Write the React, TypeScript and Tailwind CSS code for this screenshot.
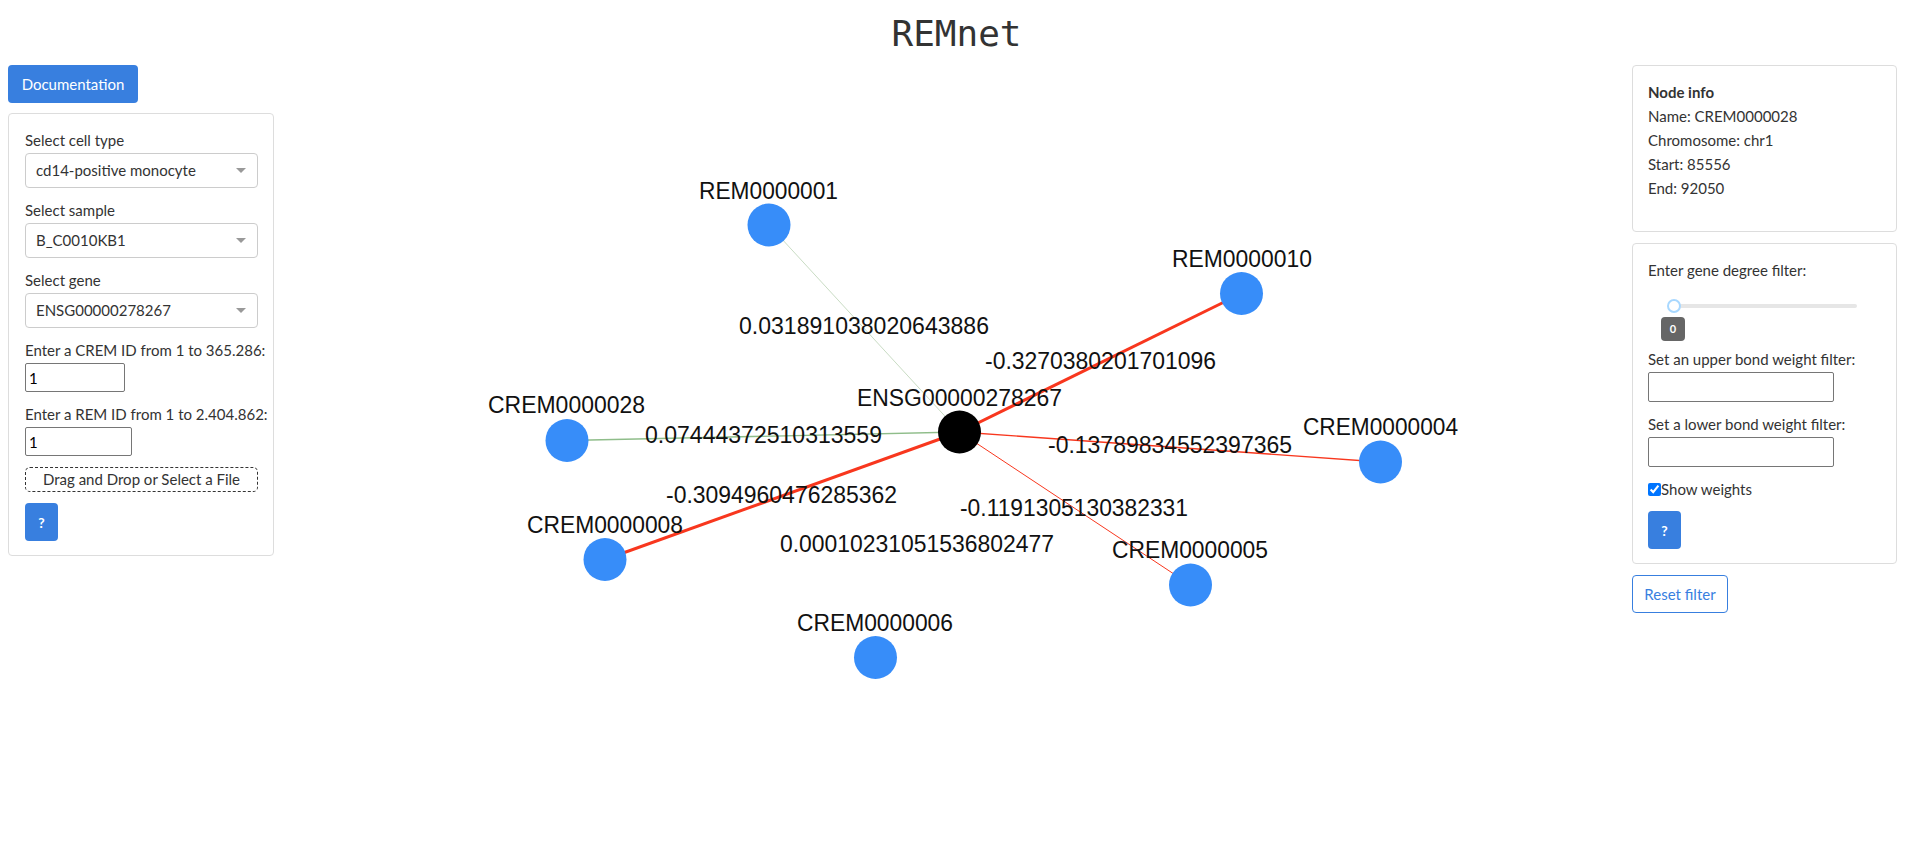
import React from "react";

const UI = { fontFamily: '"Lato", "Noto Sans", sans-serif' };

type N = { id: string; cx: number; cy: number; lx: number; lw: number; ly: number; fill: string };

const BLUE = "#378df9";
const R = 21.5;
const nodes: N[] = [
  { id: "REM0000001", cx: 769, cy: 225, lx: 699, lw: 139, ly: 199, fill: BLUE },
  { id: "REM0000010", cx: 1241.5, cy: 293.5, lx: 1172, lw: 140, ly: 267, fill: BLUE },
  { id: "CREM0000028", cx: 567, cy: 440.5, lx: 488, lw: 157, ly: 413, fill: BLUE },
  { id: "CREM0000004", cx: 1380.5, cy: 462, lx: 1303, lw: 155, ly: 435, fill: BLUE },
  { id: "CREM0000008", cx: 605, cy: 559.5, lx: 527, lw: 156, ly: 533, fill: BLUE },
  { id: "CREM0000005", cx: 1190.5, cy: 585, lx: 1112, lw: 156, ly: 558, fill: BLUE },
  { id: "CREM0000006", cx: 875.5, cy: 657.5, lx: 797, lw: 156, ly: 631, fill: BLUE },
  { id: "ENSG00000278267", cx: 959.5, cy: 432, lx: 857, lw: 205, ly: 406, fill: "#000000" },
];

const C = { x: 959.5, y: 432 };
const edges = [
  { to: 0, color: "#c9dcc4", w: 1 },
  { to: 2, color: "#8fbd8a", w: 1.3 },
  { to: 1, color: "#f8371e", w: 3 },
  { to: 4, color: "#f8371e", w: 3 },
  { to: 3, color: "#f8371e", w: 1.3 },
  { to: 5, color: "#f8371e", w: 1 },
];

const edgeLabels = [
  { t: "0.031891038020643886", x: 739, w: 250, y: 334 },
  { t: "0.07444372510313559", x: 645, w: 237, y: 443 },
  { t: "-0.3270380201701096", x: 985, w: 231, y: 369 },
  { t: "-0.13789834552397365", x: 1048, w: 244, y: 453 },
  { t: "-0.3094960476285362", x: 666, w: 231, y: 503 },
  { t: "-0.1191305130382331", x: 960, w: 228, y: 516 },
  { t: "0.00010231051536802477", x: 780, w: 274, y: 552 },
];

function Graph() {
  return (
    <svg width="1358" height="802" viewBox="274 65 1358 802" className="block">
      {edges.map((e, i) => (
        <line key={i} x1={C.x} y1={C.y} x2={nodes[e.to].cx} y2={nodes[e.to].cy} stroke={e.color} strokeWidth={e.w} />
      ))}
      {nodes.map((n) => (
        <circle key={n.id} cx={n.cx} cy={n.cy} r={R} fill={n.fill} />
      ))}
      {nodes.map((n) => (
        <text
          key={n.id + "l"}
          x={n.lx}
          y={n.ly}
          textLength={n.lw}
          lengthAdjust="spacingAndGlyphs"
          fontFamily='"Liberation Sans", Arial, sans-serif'
          fontSize="23"
          fill="#111"
        >
          {n.id}
        </text>
      ))}
      {edgeLabels.map((l) => (
        <text
          key={l.t}
          x={l.x}
          y={l.y}
          textLength={l.w}
          lengthAdjust="spacingAndGlyphs"
          fontFamily='"Liberation Sans", Arial, sans-serif'
          fontSize="23"
          fill="#111"
        >
          {l.t}
        </text>
      ))}
    </svg>
  );
}

function FakeSelect({ value }: { value: string }) {
  return (
    <div className="mt-[3px] h-[35px] w-[233px] border border-[#cccccc] rounded-[4px] flex items-center justify-between pl-[10px] pr-[11px] text-[15px] text-[#333]">
      <span>{value}</span>
      <svg width="10" height="5" viewBox="0 0 10 5">
        <path d="M0 0 L10 0 L5 5 Z" fill="#999" />
      </svg>
    </div>
  );
}

function Label({ children }: { children: React.ReactNode }) {
  return <div className="h-[20px] leading-[20px] text-[15px] text-[#333] whitespace-nowrap">{children}</div>;
}

function QButton() {
  return (
    <button className="h-[38px] w-[33px] rounded-[4px] bg-[#387fdf] text-white text-[14px] font-bold flex items-center justify-center">
      ?
    </button>
  );
}

export default function App() {
  return (
    <div className="w-[1913px] h-[867px] bg-white overflow-hidden" style={UI}>
      <div className="h-[65px] flex justify-center">
        <div
          className="pt-[16px] text-[36px] leading-none text-[#333]"
          style={{ fontFamily: '"DejaVu Sans Mono", monospace' }}
        >
          REMnet
        </div>
      </div>
      <div className="flex">
        <div className="ml-2 w-[266px] flex flex-col">
          <button className="h-[38px] w-[130px] rounded-[4px] bg-[#387fdf] text-white text-[15px]">
            Documentation
          </button>
          <div className="mt-[10px] border border-[#dddddd] rounded-[4px] px-4 pt-4 pb-[14px] flex flex-col">
            <Label>Select cell type</Label>
            <FakeSelect value="cd14-positive monocyte" />
            <div className="mt-3">
              <Label>Select sample</Label>
            </div>
            <FakeSelect value="B_C0010KB1" />
            <div className="mt-3">
              <Label>Select gene</Label>
            </div>
            <FakeSelect value="ENSG00000278267" />
            <div className="mt-3">
              <Label>Enter a CREM ID from 1 to 365.286:</Label>
            </div>
            <input
              defaultValue="1"
              className="mt-[3px] h-[29px] w-[100px] border border-[#767676] rounded-[2px] px-[3px] text-[15px] text-black outline-none"
            />
            <div className="mt-3">
              <Label>Enter a REM ID from 1 to 2.404.862:</Label>
            </div>
            <input
              defaultValue="1"
              className="mt-[3px] h-[29px] w-[107px] border border-[#767676] rounded-[2px] px-[3px] text-[15px] text-black outline-none"
            />
            <div className="mt-[11px] h-[25px] w-[233px] border border-dashed border-[#333] rounded-[5px] flex items-center justify-center text-[15px] text-[#333]">
              Drag and Drop or Select a File
            </div>
            <div className="mt-[11px]">
              <QButton />
            </div>
          </div>
        </div>
        <div className="flex-1">
          <Graph />
        </div>
        <div className="w-[265px] mr-4 flex flex-col">
          <div className="h-[167px] border border-[#dddddd] rounded-[4px] px-[15px] pt-[14px] text-[15px] leading-[24px] text-[#333]">
            <div className="font-bold">Node info</div>
            <div>Name: CREM0000028</div>
            <div>Chromosome: chr1</div>
            <div>Start: 85556</div>
            <div>End: 92050</div>
          </div>
          <div className="mt-[11px] border border-[#dddddd] rounded-[4px] px-[15px] pt-4 pb-[14px] flex flex-col">
            <Label>Enter gene degree filter:</Label>
            <div className="relative h-[69px]">
              <div className="absolute left-[20px] top-[24px] w-[189px] h-[4px] rounded-full bg-[#e6e6e6]" />
              <div className="absolute left-[19px] top-[19px] w-[14px] h-[14px] rounded-full bg-white border-2 border-[#a8d8ff]" />
              <div className="absolute left-[13px] top-[37px] w-[24px] h-[24px] rounded-[4px] bg-[#666] text-white text-[11px] font-bold flex items-center justify-center">
                0
              </div>
            </div>
            <Label>Set an upper bond weight filter:</Label>
            <input className="mt-[3px] h-[30px] w-[186px] border border-[#767676] rounded-[2px] outline-none" />
            <div className="mt-3">
              <Label>Set a lower bond weight filter:</Label>
            </div>
            <input className="mt-[3px] h-[30px] w-[186px] border border-[#767676] rounded-[2px] outline-none" />
            <label className="mt-3 h-[20px] flex items-center text-[15px] text-[#333]">
              <input type="checkbox" defaultChecked className="m-0 w-[13px] h-[13px] accent-[#0075ff]" />
              <span>Show weights</span>
            </label>
            <div className="mt-3">
              <QButton />
            </div>
          </div>
          <button className="mt-[11px] h-[38px] w-[96px] rounded-[4px] border border-[#387fdf] text-[#387fdf] text-[15px] bg-white">
            Reset filter
          </button>
        </div>
      </div>
    </div>
  );
}
